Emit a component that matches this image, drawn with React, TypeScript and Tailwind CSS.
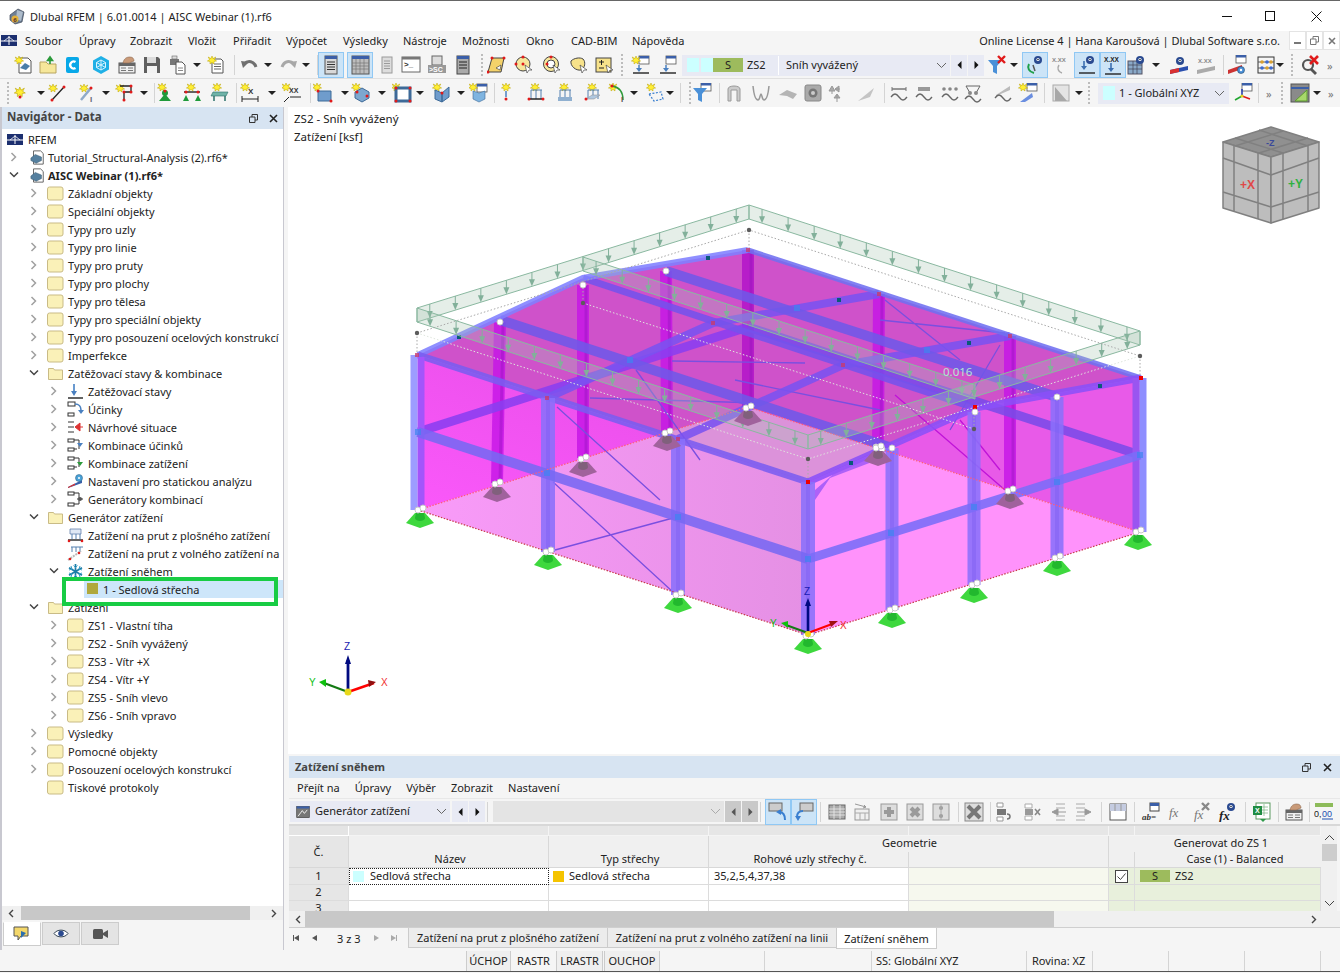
import React, { ReactNode } from "react";

const Sx = ({ x, y, s = 1 }: { x: number; y: number; s?: number }) => (
  <path transform={`translate(${x} ${y}) scale(${s})`} d="M4 0l1 2.6L7.8 1 6.4 3.6 8.6 5l-2.6.4L6 8 4 6.4 2 8l0-2.6L-.6 5l2.2-1.4L.2 1 3 2.6z" fill="#ffee33" stroke="#b9a100" strokeWidth=".5" />
);
const Rd = ({ x, y }: { x: number; y: number }) => <circle cx={x} cy={y} r="1.5" fill="#e01a1a" />;
const Win = ({ x = 9, y = 1 }: { x?: number; y?: number }) => (
  <g><rect x={x} y={y} width="10" height="8" fill="#fff" stroke="#555" strokeWidth=".8" /><rect x={x} y={y} width="10" height="2.5" fill="#3b5fa8" /></g>
);
const Arr = () => <path d="M14 10l-1 5-4-2z" fill="#fff" stroke="#333" strokeWidth=".6" />;
const Txt = ({ x, y, t, c = "#333", s = 6, w = 700 }: { x: number; y: number; t: string; c?: string; s?: number; w?: number }) => (
  <text x={x} y={y} fontSize={s} fontWeight={w} fill={c} fontFamily="Liberation Sans, sans-serif">{t}</text>
);
const Base = ({ y = 17, c = "#222" }: { y?: number; c?: string }) => <path d={`M2 ${y}h16`} stroke={c} strokeWidth="1.4" />;
const DownA = ({ x = 8, y = 7, c = "#4a80c0" }: { x?: number; y?: number; c?: string }) => (
  <g><path d={`M${x} ${y}v6`} stroke={c} strokeWidth="1.6" /><path d={`M${x - 3} ${y + 5}h6l-3 4z`} fill={c} /></g>
);
const EyeI = ({ x = 12, y = 5 }: { x?: number; y?: number }) => (
  <g><circle cx={x} cy={y} r="4" fill="#2a4a90" /><circle cx={x} cy={y - .5} r="1.6" fill="#fff" /><circle cx={x} cy={y - .5} r=".8" fill="#123" /></g>
);
const Wave = ({ y = 14 }: { y?: number }) => <path d={`M2 ${y}c3-4 5-4 8 0s5 4 8 0`} fill="none" stroke="#666" strokeWidth="1.3" />;
const G = "#9a9a9a";

const ICONS: Record<string, ReactNode> = {
  new: <g><path d="M5 3h9l3 3v12H5z" fill="#fff" stroke="#555" /><path d="M6 13l5-5 5 3-4 4z" fill="#4a7ea8" /><Sx x={1} y={1} /></g>,
  open: <g><path d="M2 7h6l2 2h8v9H2z" fill="#f6e79a" stroke="#b8a560" /><path d="M12 9V3M9.5 5.5L12 2l2.5 3.500z" stroke="#2b9a3a" fill="#2b9a3a" strokeWidth="1.600" /></g>,
  dlubal: <g><rect x="3" y="2" width="13" height="16" rx="2" fill="#08a8e8" /><path d="M12.500 7a3.500 3.500 0 1 0 0 6" fill="none" stroke="#fff" strokeWidth="2.400" /></g>,
  web: <g><path d="M10 1l8 4.500v9L10 19l-8-4.500v-9z" fill="#1fb0e6" /><path d="M10 5l4.500 2.500v5L10 15l-4.500-2.500v-5zM10 5v10M5.500 7.500l9 5M14.500 7.500l-9 5" fill="none" stroke="#d9f4ff" strokeWidth="1" /></g>,
  report: <g><rect x="2" y="8" width="16" height="10" fill="#efefef" stroke="#555" /><path d="M2 8h16v3H2z" fill="#666" /><path d="M6 8c1-5 4-6 7-6 3 0 4 2 4 4l-5 2z" fill="#c99a78" stroke="#8d6a50" strokeWidth=".6" /><path d="M4 13h5M4 15.500h5M11 13h5M11 15.500h5" stroke="#777" /></g>,
  save: <g><path d="M2 2h14l2 2v14H2z" fill="#5f5f5f" /><rect x="5" y="2" width="9" height="6" fill="#dcdcdc" /><rect x="5" y="11" width="10" height="7" fill="#f2f2f2" /></g>,
  print: <g><rect x="2" y="4" width="9" height="6" fill="#777" /><rect x="4" y="1" width="5" height="3" fill="#ddd" stroke="#666" strokeWidth=".6" /><path d="M8 7h6l3 3v9H8z" fill="#fff" stroke="#555" /><path d="M10 13h5M10 15.500h5" stroke="#888" /></g>,
  note: <g><path d="M6 4h9l2 2v12H6z" fill="#fff" stroke="#555" /><path d="M8 9h7M8 11.500h7M8 14h7" stroke="#666" /><Sx x={2} y={1} /></g>,
  undo: <g><path d="M4 9c4-4 10-3 12 3" fill="none" stroke="#707070" strokeWidth="3" /><path d="M1 6l8 1-6 6z" fill="#707070" /></g>,
  redo: <g><path d="M16 9c-4-4-10-3-12 3" fill="none" stroke="#a8a8a8" strokeWidth="3" /><path d="M19 6l-8 1 6 6z" fill="#a8a8a8" /></g>,
  panel: <g><rect x="4" y="1" width="12" height="18" fill="#d8d8d8" stroke="#555" /><rect x="4" y="1" width="12" height="3" fill="#3b5fa8" /><path d="M6 7h8M6 9.500h8M6 12h8M6 14.500h8" stroke="#333" /></g>,
  table: <g><rect x="2" y="1" width="17" height="18" fill="#bdbdbd" stroke="#555" /><rect x="2" y="1" width="17" height="3" fill="#3b5fa8" /><path d="M2 8h17M2 11h17M2 14h17M6 4v15M10 4v15M14 4v15" stroke="#777" strokeWidth=".7" /></g>,
  gdoc: <g><rect x="5" y="2" width="10" height="16" fill="#ddd" stroke={G} /><path d="M7 6h6M7 8.500h6M7 11h6M7 13.500h6" stroke={G} /></g>,
  cons: <g><rect x="1" y="2" width="18" height="15" fill="#fff" stroke="#666" /><rect x="1" y="2" width="18" height="2.500" fill="#777" /><Txt x={3} y={12} t=">_" s={8} /></g>,
  sc: <g><rect x="5" y="1" width="10" height="9" fill="#ddd" stroke="#666" /><rect x="1" y="10" width="18" height="8" fill="#999" /><Txt x={2} y={17} t=">SC" s={7} c="#fff" /></g>,
  list: <g><rect x="4" y="1" width="12" height="18" fill="#aaa" stroke="#444" /><rect x="4" y="1" width="12" height="3" fill="#3b5fa8" /><path d="M6 7h8M6 10h8M6 13h8" stroke="#222" /></g>,
  s1: <g><path d="M5 3h12l-3 14H1z" fill="#f4d26a" stroke="#444" /><Rd x={5} y={3} /><Rd x={17} y={3} /><Rd x={1} y={17} /><Arr /></g>,
  s2: <g><circle cx="9" cy="9" r="7" fill="#f7e79b" stroke="#444" /><Rd x={9} y={2} /><Rd x={2} y={9} /><Rd x={9} y={9} /><path d="M11 10l2 8 2-3 3 0z" fill="#fff" stroke="#333" strokeWidth=".6" /></g>,
  s3: <g><circle cx="9" cy="9" r="7.500" fill="#f7e79b" stroke="#444" /><circle cx="9" cy="9" r="4" fill="#fff" stroke="#444" /><Rd x={9} y={2} /><Rd x={5} y={9} /><path d="M11 10l2 8 2-3 3 0z" fill="#fff" stroke="#333" strokeWidth=".6" /></g>,
  s4: <g><path d="M3 6c3-3 9-4 12-2 3 3 2 9-2 11-5 1-11-4-10-9z" fill="#f7e28a" stroke="#444" /><path d="M12 10l2 8 2-3 3 0z" fill="#fff" stroke="#333" strokeWidth=".6" /></g>,
  s5: <g><rect x="2" y="3" width="15" height="14" fill="#f7e28a" stroke="#444" /><path d="M5 7h5M7.500 5v5M5 13h5" stroke="#222" /><path d="M12 10l2 8 2-3 3 0z" fill="#fff" stroke="#333" strokeWidth=".6" /></g>,
  w1: <g><Win x={8} y={1} /><Sx x={1} y={1} /><path d="M8 10v5" stroke="#4a80c0" strokeWidth="1.500" /><path d="M5 13h6l-3 4z" fill="#4a80c0" /><Base y={18} /></g>,
  w2: <g><Win x={8} y={1} /><path d="M8 10v5" stroke="#4a80c0" strokeWidth="1.500" /><path d="M5 13h6l-3 4z" fill="#4a80c0" /><Base y={18} /></g>,
  star: <g><Sx x={5} y={4} s={1.200} /><Rd x={10} y={14} /></g>,
  line: <g><Sx x={1} y={1} /><path d="M4 17L16 4" stroke="#222" strokeWidth="1.300" /><Rd x={4} y={17} /><Rd x={16} y={4} /></g>,
  lineI: <g><Sx x={2} y={1} /><path d="M3 17L13 5" stroke="#8fa9c8" strokeWidth="2.500" /><Rd x={13} y={5} /><Txt x={12} y={19} t="I" s={8} c="#667" /></g>,
  poly: <g><Sx x={1} y={1} /><path d="M5 3h11v6H9v8" fill="none" stroke="#222" strokeWidth="1.300" /><Rd x={16} y={3} /><Rd x={16} y={9} /><Rd x={9} y={9} /><Rd x={9} y={17} /></g>,
  pawn: <g><Sx x={3} y={0} /><circle cx="10" cy="10" r="3" fill="#1f9a3a" /><path d="M4 18l5-6h2l5 6z" fill="#1f9a3a" /><Rd x={10} y={8} /></g>,
  pawn2: <g><Sx x={5} y={0} /><path d="M2 9h16" stroke="#222" strokeWidth="1.400" /><Rd x={4} y={9} /><Rd x={16} y={9} /><path d="M1 18l3-6 3 6zM13 18l3-6 3 6z" fill="#1f9a3a" /></g>,
  slab: <g><Sx x={3} y={0} /><path d="M3 9h15l-2 4H1z" fill="#6fb3a8" stroke="#2b7068" strokeWidth=".6" /><path d="M4 13v5M15 13v5" stroke="#2b7068" strokeWidth="1.500" /></g>,
  dimx: <g><Sx x={1} y={0} /><Txt x={8} y={11} t="X" s={8} /><path d="M2 16h16M2 13v6M18 13v6" stroke="#222" /></g>,
  dimxx: <g><Sx x={0} y={0} /><Txt x={7} y={10} t="XX" s={7} /><path d="M8 14h11M7 14l-5 5" stroke="#222" /></g>,
  surf: <g><Sx x={0} y={0} /><path d="M5 8h13v10H5z" fill="#6f9ccc" stroke="#3d6a98" /><Rd x={5} y={8} /><Rd x={18} y={18} /></g>,
  solid: <g><Sx x={1} y={0} /><path d="M4 9l7-4 7 4v6l-7 4-7-4z" fill="#7da7cf" stroke="#3d6a98" /><Rd x={6} y={9} /><Rd x={16} y={13} /></g>,
  frame: <g><Sx x={0} y={0} /><rect x="4" y="5" width="14" height="13" fill="#fff" stroke="#3d6a98" strokeWidth="3" /><Rd x={4} y={5} /><Rd x={18} y={5} /><Rd x={4} y={18} /><Rd x={18} y={18} /></g>,
  book: <g><Sx x={1} y={0} /><path d="M3 7l7 3v9l-7-3zM10 10l7-6v10l-7 5z" fill="#6f9ccc" stroke="#3d6a98" /><Rd x={10} y={10} /></g>,
  box3: <g><Win x={8} y={1} /><Sx x={0} y={0} /><path d="M4 8l6 2 6-2v8l-6 3-6-3z" fill="#7fb4e0" stroke="#3d6a98" strokeWidth=".6" /></g>,
  pin: <g><Sx x={5} y={0} /><path d="M9 8v6" stroke="#4a80c0" strokeWidth="1.500" /><Rd x={9} y={16} /></g>,
  bars: <g><Sx x={5} y={0} /><path d="M5 7h11M5 7v9M10 7v9M15 7v9" stroke="#5580b0" /><path d="M3 16h14" stroke="#222" strokeWidth="1.500" /><Rd x={3} y={16} /><Rd x={17} y={16} /></g>,
  bars2: <g><Sx x={5} y={0} /><path d="M5 7h11M5 7v9M10 7v9M15 7v9" stroke="#5580b0" /><rect x="3" y="14" width="14" height="4" fill="#90b0d0" /></g>,
  bars3: <g><Sx x={5} y={0} /><path d="M5 7h11M5 7v9M10 7v9M15 7v9" stroke="#5580b0" /><path d="M3 16l6-4h8l-6 4z" fill="#b0c8e0" stroke="#888" strokeWidth=".5" /><Rd x={3} y={16} /></g>,
  curveI: <g><Sx x={1} y={0} /><path d="M4 3c7 1 11 6 11 14" fill="none" stroke="#2f9a3a" strokeWidth="1.500" /><Txt x={13} y={19} t="I" s={8} c="#555" /><Rd x={4} y={3} /></g>,
  dash: <g><Sx x={2} y={0} /><path d="M4 11l12-2 2 7-9 2z" fill="none" stroke="#3a7fd0" strokeDasharray="2 1.500" strokeWidth="1.200" /></g>,
  filt: <g><Win x={9} y={0} /><path d="M1 5h14l-5 6v8l-4-2v-6z" fill="#4a90d8" /></g>,
  filtx: <g><path d="M1 5h14l-5 6v8l-4-2v-6z" fill="#4a90d8" /><path d="M11 1l7 7M18 1l-7 7" stroke="#e01a1a" strokeWidth="2.400" /></g>,
  arch: <path d="M4 18V6c0-4 12-4 12 0v12h-3V7H7v11z" fill="#ccc" stroke={G} />,
  vee: <path d="M2 3c1 10 3 14 5 14s2-6 3-6 1 6 3 6 4-4 5-14" fill="none" stroke={G} strokeWidth="1.500" />,
  wing: <path d="M1 12l8-5 10 4-4 5-6-3z" fill="#b5b5b5" />,
  cubeg: <g><rect x="2" y="2" width="16" height="16" rx="2" fill="#aaa" stroke="#888" /><circle cx="10" cy="10" r="4.500" fill="#777" /><circle cx="10" cy="10" r="2" fill="#ccc" /></g>,
  arrg: <path d="M5 3l3 5H2zM5 8v3M13 6H8m4-3v6l-4-3zM10 19v-7m-3 3l3-4 3 4z" fill="#aaa" stroke="#999" />,
  blade: <path d="M2 18L18 5l-4 9z" fill="#c4c4c4" />,
  l1: <g><path d="M3 6h14" stroke="#777" strokeWidth="1.500" /><path d="M3 4v4M17 4v4" stroke="#777" /><Wave /></g>,
  l2: <g><path d="M4 6h12" stroke="#999" strokeWidth="4" /><Wave /></g>,
  l3: <g><circle cx="4" cy="6" r="1.800" fill="#888" /><circle cx="10" cy="6" r="1.800" fill="#888" /><circle cx="16" cy="6" r="1.800" fill="#888" /><Wave /></g>,
  l4: <g><path d="M3 3h14M3 3l4 7M17 3l-4 7" stroke="#666" /><circle cx="7" cy="10" r="2" fill="#888" /><circle cx="13" cy="10" r="2" fill="#888" /><Wave y={16} /></g>,
  l5: <g><path d="M3 12L17 3v4L3 13z" fill="#bbb" /><Wave y={15} /></g>,
  l6: <g><Win x={9} y={0} /><Sx x={1} y={0} /><path d="M2 19l12-9 1 4-8 5z" fill="#6a8ee0" /></g>,
  tri: <g><rect x="2" y="2" width="16" height="16" fill="#e4e4e4" stroke="#aaa" /><path d="M4 4l12 14H4z" fill="#a8a8a8" /></g>,
  xyz: <g><Win x={9} y={0} /><path d="M9 13V6" stroke="#2a3fae" strokeWidth="1.600" /><path d="M9 13l8 3" stroke="#e01a1a" strokeWidth="1.600" /><path d="M9 13l-7 4" stroke="#1fa52f" strokeWidth="1.600" /><circle cx="9" cy="13" r="1.500" fill="#e5d21a" /></g>,
  gtab: <g><rect x="1" y="1" width="18" height="18" fill="#8a8a8a" stroke="#555" /><path d="M1 5h18" stroke="#3b5fa8" strokeWidth="2" /><path d="M5 18L17 7v11z" fill="#a7d86a" stroke="#5d9a30" /></g>,
  eyearc: <g><EyeI x={13} y={5} /><path d="M4 9c-2 4 0 8 5 9" fill="none" stroke="#1fa04a" strokeWidth="2" /><path d="M8 10l2 6" stroke="#555" strokeWidth="1.500" /></g>,
  xxxarc: <g><Txt x={1} y={7} t="X.XX" s={6} c="#888" /><path d="M8 10c-2 3-1 7 3 8" fill="none" stroke="#aaa" strokeWidth="1.500" /></g>,
  eyeload: <g><EyeI x={13} y={5} /><DownA x={7} y={6} c="#3c6fb0" /><Base y={18} /></g>,
  xxxload: <g><Txt x={1} y={7} t="X.XX" s={6.500} c="#222" /><DownA x={8} y={8} c="#3c6fb0" /><Base y={19} /></g>,
  grideye: <g><rect x="1" y="6" width="14" height="13" fill="#8aa9c8" stroke="#556" /><path d="M1 10h14M1 14h14M6 6v13M10 6v13" stroke="#445" strokeWidth=".7" /><EyeI x={13} y={5} /></g>,
  eyebeam: <g><EyeI x={11} y={6} /><path d="M1 15l18-4v4L1 19z" fill="#2a4fae" /><path d="M1 15l9-2v4l-9 2z" fill="#d93030" /></g>,
  xxxbeam: <g><Txt x={2} y={8} t="X.XX" s={6} c="#888" /><path d="M1 15l18-4v4L1 19z" fill="#aaa" /></g>,
  wingear: <g><Win x={9} y={0} /><path d="M1 15l14-5v4L1 19z" fill="#c33" /><circle cx="14" cy="15" r="3.500" fill="#4a90d8" stroke="#246" strokeWidth=".6" /><circle cx="14" cy="15" r="1.200" fill="#fff" /></g>,
  abacus: <g><rect x="2" y="2" width="16" height="16" fill="none" stroke="#333" /><path d="M2 7h16M2 13h16" stroke="#555" /><circle cx="6" cy="7" r="1.800" fill="#d9a030" /><circle cx="11" cy="7" r="1.800" fill="#3d6ad0" /><circle cx="15" cy="7" r="1.800" fill="#d9a030" /><circle cx="6" cy="13" r="1.800" fill="#3d6ad0" /><circle cx="11" cy="13" r="1.800" fill="#d9a030" /><circle cx="15" cy="13" r="1.800" fill="#3d6ad0" /></g>,
  searchx: <g><circle cx="8" cy="10" r="5" fill="none" stroke="#555" strokeWidth="2.200" /><path d="M11 14l5 5" stroke="#555" strokeWidth="2.800" /><path d="M10 1l8 8M18 1l-8 8" stroke="#e01a1a" strokeWidth="2.600" /></g>,
  tgen: <g><rect x="1" y="2" width="18" height="16" fill="#777" stroke="#444" /><rect x="1" y="2" width="18" height="3" fill="#3b5fa8" /><path d="M3 16l6-8 3 4 4-5" stroke="#fff" strokeWidth="1.200" fill="none" /></g>,
  winback: <g><rect x="1" y="1" width="13" height="8" fill="#ccc" stroke="#666" /><path d="M17 18c0-5-2-8-6-8" fill="none" stroke="#3a7fd0" strokeWidth="2" /><path d="M8 10l5-3v6z" fill="#3a7fd0" /></g>,
  winfwd: <g><rect x="6" y="1" width="13" height="8" fill="#ccc" stroke="#666" /><path d="M3 15c0-4 2-6 6-6" fill="none" stroke="#3a7fd0" strokeWidth="2" /><path d="M1 14l3 5 3-5z" fill="#3a7fd0" /></g>,
  tgrid: <g><rect x="2" y="3" width="16" height="14" fill="#aaa" stroke="#666" /><path d="M2 7h16M2 10h16M2 13h16M7 3v14M13 3v14" stroke="#eee" strokeWidth=".8" /></g>,
  tins: <g><rect x="3" y="7" width="14" height="11" fill="#f0f0f0" stroke="#999" /><path d="M3 11h14M8 11v7M13 11v7" stroke="#aaa" /><path d="M3 2l11 3m0 0l-2-2m2 2l-3 1" stroke="#999" fill="none" /></g>,
  tplus: <g><rect x="2" y="2" width="16" height="16" fill="#ddd" stroke="#999" /><path d="M10 5v10M5 10h10" stroke="#9a9a9a" strokeWidth="4" /></g>,
  tx: <g><rect x="2" y="2" width="16" height="16" fill="#ddd" stroke="#999" /><path d="M6 6l8 8M14 6l-8 8" stroke="#9a9a9a" strokeWidth="4" /></g>,
  tdots: <g><rect x="2" y="2" width="16" height="16" fill="#ddd" stroke="#999" /><circle cx="10" cy="6" r="2" fill="#999" /><circle cx="10" cy="14" r="2" fill="#999" /><path d="M10 2v16" stroke="#aaa" /></g>,
  bigx: <g><rect x="1" y="1" width="18" height="18" fill="#ddd" stroke="#888" /><path d="M4 4l12 12M16 4L4 16" stroke="#777" strokeWidth="4" /></g>,
  b1: <g><path d="M2 1h6v4H2z" fill="#fff" stroke="#999" /><rect x="2" y="7" width="9" height="6" fill="#777" /><path d="M2 15h6v4H2z" fill="#fff" stroke="#999" /><path d="M12 12c4 0 4 5 0 5" fill="none" stroke="#777" strokeWidth="1.500" /></g>,
  b2: <g><path d="M3 2h7v4H3zM3 14h7v4H3z" fill="#fff" stroke="#aaa" /><rect x="3" y="7" width="8" height="6" fill="#999" /><path d="M13 7l5 6M18 7l-5 6" stroke="#888" strokeWidth="1.600" /></g>,
  b3: <g><path d="M8 2h9M8 6h9M8 14h9M8 18h9" stroke="#aaa" /><path d="M18 10H7m3-3l-6 3 6 3z" fill="#999" stroke="#999" /></g>,
  b4: <g><path d="M2 2h9M2 6h9M2 14h9M2 18h9" stroke="#aaa" /><path d="M3 10h11m-3-3l6 3-6 3z" fill="#999" stroke="#999" /></g>,
  hdr: <g><rect x="2" y="2" width="16" height="16" fill="#fff" stroke="#555" /><rect x="2" y="2" width="16" height="7" fill="#c4cbe0" /><path d="M7 2v7M13 2v7" stroke="#999" /></g>,
  abeq: <g><rect x="9" y="1" width="9" height="8" fill="#fff" stroke="#444" /><rect x="9" y="1" width="9" height="3" fill="#3b5fa8" /><text x="1" y="18" fontSize="9" fontWeight="700" fontStyle="italic" fontFamily="Liberation Serif, serif" fill="#333">ab=</text></g>,
  fx: <text x="2" y="15" fontSize="13" fontStyle="italic" fontFamily="Liberation Serif, serif" fill="#777">fx</text>,
  fxx: <g><text x="2" y="17" fontSize="13" fontStyle="italic" fontFamily="Liberation Serif, serif" fill="#777">fx</text><path d="M10 1l7 7M17 1l-7 7" stroke="#888" strokeWidth="2.400" /></g>,
  fxe: <g><text x="1" y="18" fontSize="13" fontWeight="700" fontStyle="italic" fontFamily="Liberation Serif, serif" fill="#222">fx</text><EyeI x={13} y={5} /></g>,
  excel: <g><rect x="4" y="1" width="14" height="16" fill="#fff" stroke="#5a9a60" /><path d="M9 5h7M9 8h7M9 11h7M12 2v12" stroke="#7ab07e" strokeWidth=".7" /><rect x="1" y="4" width="9" height="9" fill="#1e8c42" /><Txt x={3} y={11} t="X" s={7} c="#fff" /><path d="M8 17h6l-3 3z" fill="#2f9a4a" /></g>,
  zero: <g><rect x="1" y="1" width="18" height="4" fill="#8dbb5a" /><Txt x={0} y={15} t="0," s={9} w={400} c="#222" /><Txt x={8} y={15} t="00" s={9} w={400} c="#1f4fb0" /><path d="M8 17h11" stroke="#1f4fb0" /></g>,
};

const Ico = ({ k, s = 20 }: { k: string; s?: number }) => (
  <svg viewBox="0 0 20 20" width={s} height={s} className="shrink-0">{ICONS[k]}</svg>
);
const Drop = () => <div className="h-0 w-0 border-x-[4px] border-t-[4px] border-x-transparent border-t-[#222]" />;

type It = [number, ReactNode];
const i = (cx: number, k: string): It => {
  if (k === "drop") return [cx - 4, <Drop />];
  if (k === "sep") return [cx, <div className="h-[20px] w-px bg-[#d4d4d4]" />];
  if (k === "grip") return [cx - 1, <div className="h-[22px] w-[2px] border-l-2 border-dotted border-[#bcbcbc]" />];
  if (k === "more") return [cx - 4, <span className="text-[11px] leading-none text-[#777]">»</span>];
  if (k[0] === "*") return [cx - 13, <div className="flex h-[26px] w-[26px] items-center justify-center border border-[#90c8f4] bg-[#cce4f7]"><Ico k={k.slice(1)} /></div>];
  return [cx - 10, <Ico k={k} />];
};
function Strip({ from = 0, items }: { from?: number; items: It[] }) {
  return (
    <div className="flex h-full items-center">
      <div className="shrink-0" style={{ width: items[0][0] - from }} />
      {items.map(([x, n], idx) => (
        <div key={idx} className="flex shrink-0 items-center" style={{ width: idx < items.length - 1 ? items[idx + 1][0] - x : undefined }}>{n}</div>
      ))}
    </div>
  );
}
const list = (a: [number, string][]) => a.map(([c, k]) => i(c, k));
const Chevs = ({ dim = false }: { dim?: boolean }) => (
  <div className="flex h-[21px] gap-px">
    {["M4 0L0 4l4 4z", "M0 0l4 4-4 4z"].map((d) => (
      <div key={d} className={`flex w-[16px] items-center justify-center ${dim ? "bg-[#c9c9c9]" : "bg-[#e8eaf4]"}`}>
        <svg width="5" height="8" viewBox="0 0 4 8"><path d={d} fill={dim ? "#555" : "#111"} /></svg>
      </div>
    ))}
  </div>
);
const VChev = ({ c = "#666" }: { c?: string }) => (
  <svg width="11" height="7" viewBox="0 0 11 7"><path d="M1 1l4.500 4.500L10 1" fill="none" stroke={c} /></svg>
);

const TB1 = [
  ...list([[24, "new"], [48, "open"], [73, "dlubal"], [101, "web"], [127, "report"], [152, "save"], [178, "print"], [197, "drop"], [216, "note"], [234, "sep"], [250, "undo"], [268, "drop"], [288, "redo"], [306, "drop"], [317, "sep"], [331, "*panel"], [360, "*table"], [387, "gdoc"], [411, "cons"], [437, "sc"], [463, "list"], [482, "grip"], [497, "s1"], [524, "s2"], [552, "s3"], [578, "s4"], [604, "s5"], [622, "grip"], [641, "w1"], [668, "w2"]]),
  [682, (
    <div className="flex h-[21px] w-[268px] items-center bg-[#e8eaf4]">
      <div className="ml-[5px] h-[14px] w-[12px] bg-[#ccffff]" /><div className="ml-[2px] h-[14px] w-[12px] bg-[#ccffff]" />
      <div className="flex h-[14px] w-[30px] items-center justify-center bg-[#9dbb5d] pb-[1px] text-[#222]">S</div>
      <span className="ml-[4px] w-[31px] pb-[2px]">ZS2</span><div className="h-[19px] w-px bg-white" /><span className="ml-[7px] flex-1 pb-[2px]">Sníh vyvážený</span>
      <div className="mr-[3px]"><VChev /></div>
    </div>
  )] as It,
  [951, <Chevs />] as It,
  ...list([[997, "filtx"], [1014, "drop"], [1035, "*eyearc"], [1061, "xxxarc"], [1087, "*eyeload"], [1113, "*xxxload"], [1137, "grideye"], [1156, "drop"], [1179, "eyebeam"], [1206, "xxxbeam"], [1223, "sep"], [1237, "wingear"], [1266, "abacus"], [1280, "drop"], [1292, "grip"], [1310, "searchx"], [1331, "more"]]),
];
const TB2 = [
  ...list([[8, "grip"], [20, "star"], [41, "drop"], [58, "line"], [88, "lineI"], [106, "drop"], [125, "poly"], [144, "drop"], [154, "sep"], [165, "pawn"], [192, "pawn2"], [220, "slab"], [236, "sep"], [250, "dimx"], [272, "drop"], [292, "dimxx"], [310, "sep"], [323, "surf"], [345, "drop"], [361, "solid"], [382, "drop"], [402, "frame"], [420, "drop"], [442, "book"], [461, "drop"], [479, "box3"], [494, "sep"], [507, "pin"], [536, "bars"], [565, "bars2"], [593, "bars3"], [618, "curveI"], [634, "drop"], [655, "dash"], [670, "drop"], [680, "sep"], [690, "grip"], [702, "filt"], [719, "sep"], [734, "arch"], [761, "vee"], [788, "wing"], [813, "cubeg"], [837, "arrg"], [866, "blade"], [884, "sep"], [899, "l1"], [924, "l2"], [950, "l3"], [973, "l4"], [1003, "l5"], [1028, "l6"], [1044, "sep"], [1061, "tri"], [1079, "drop"], [1089, "grip"]]),
  [1098, (
    <div className="flex h-[21px] w-[131px] items-center bg-[#e8eaf4]">
      <div className="ml-[5px] h-[14px] w-[12px] bg-[#ccffff]" /><span className="ml-[4px] flex-1 whitespace-nowrap pb-[2px]">1 - Globální XYZ</span><div className="mr-[4px]"><VChev /></div>
    </div>
  )] as It,
  ...list([[1243, "xyz"], [1258, "sep"], [1270, "more"], [1282, "grip"], [1300, "gtab"], [1317, "drop"], [1332, "more"]]),
];
const TB3 = [
  [290, (
    <div className="flex h-[21px] w-[160px] items-center bg-[#e8eaf4]">
      <div className="ml-[6px]"><Ico k="tgen" s={14} /></div><span className="ml-[5px] flex-1 pb-[2px]">Generátor zatížení</span><div className="mr-[3px]"><VChev /></div>
    </div>
  )] as It,
  [452, <Chevs />] as It,
  ...list([[487, "sep"]]),
  [493, (<div className="flex h-[21px] w-[231px] items-center justify-end bg-[#e4e4e4] pr-[3px]"><VChev c="#aaa" /></div>)] as It,
  [725, <Chevs dim />] as It,
  ...list([[760, "sep"], [778, "*winback"], [804, "*winfwd"], [820, "sep"], [837, "tgrid"], [862, "tins"], [889, "tplus"], [915, "tx"], [941, "tdots"], [958, "sep"], [974, "bigx"], [990, "sep"], [1005, "b1"], [1032, "b2"], [1058, "b3"], [1084, "b4"], [1101, "sep"], [1118, "hdr"], [1134, "sep"], [1151, "abeq"], [1177, "fx"], [1202, "fxx"], [1228, "fxe"], [1245, "sep"], [1262, "excel"], [1278, "sep"], [1294, "report"], [1309, "sep"], [1324, "zero"]]),
];

const Folder = ({ open = false }: { open?: boolean }) => (
  <svg width="17" height="15" viewBox="0 0 17 15" className="shrink-0">
    {open ? <path d="M1.500 2.500h5l1 1.500h8v9.500h-14z" fill="#faf1b8" stroke="#c9bb86" /> : <rect x=".5" y="1" width="15.500" height="13" rx="2" fill="#faf1b8" stroke="#c9bb86" />}
  </svg>
);
const ModelDoc = () => (
  <svg width="15" height="17" viewBox="0 0 17 17" className="shrink-0">
    <path d="M4 1h8l3 3v12H4z" fill="#fff" stroke="#555" />
    <path d="M1 9l5-4 7 3v4l-6 3-6-3z" fill="#55809f" stroke="#2e4f66" strokeWidth=".5" />
  </svg>
);
const TIC: Record<string, ReactNode> = {
  zs: <g><path d="M7 1v9" stroke="#6a9ad0" strokeWidth="2" /><path d="M4 8h6l-3 5z" fill="#4a80c0" /><path d="M1 15h15" stroke="#222" strokeWidth="1.400" /></g>,
  uc: <g><rect x="1" y="1" width="7" height="4" fill="#fff" stroke="#333" /><path d="M8 3c4 0 6 3 6 6" fill="none" stroke="#4a80c0" strokeWidth="1.600" /><path d="M11 9h6l-3 4z" fill="#4a80c0" /><rect x="1" y="12" width="6" height="3" fill="#fff" stroke="#333" /></g>,
  ns: <g><path d="M1 3h6M1 8h6M1 13h6" stroke="#333" /><path d="M8 8l5-4v8zM12 8h4" fill="#d33" stroke="#d33" /></g>,
  ku: <g><rect x="1" y="2" width="6" height="3" fill="#fff" stroke="#333" /><rect x="1" y="11" width="6" height="3" fill="#fff" stroke="#333" /><path d="M7 3h5v9M7 12h3" fill="none" stroke="#333" /><path d="M10 6h6l-3 4z" fill="#4a80c0" /></g>,
  kz: <g><rect x="1" y="2" width="6" height="3" fill="#fff" stroke="#333" /><rect x="1" y="11" width="6" height="3" fill="#fff" stroke="#333" /><path d="M7 3h5v9M7 12h3" fill="none" stroke="#333" /><path d="M10 7h6l-3 4z" fill="#2b9a3a" /></g>,
  sa: <g><path d="M1 14L15 7v3L1 15z" fill="#3a5fa8" /><path d="M1 14l7-3.500V12l-7 3z" fill="#d33" /><circle cx="12" cy="5" r="3.500" fill="#4aa3d8" stroke="#26567a" strokeWidth=".5" /><circle cx="12" cy="5" r="1" fill="#fff" /></g>,
  gk: <g><rect x="1" y="1" width="6" height="3" fill="#fff" stroke="#333" /><rect x="1" y="12" width="6" height="3" fill="#fff" stroke="#333" /><path d="M7 2h5v5M7 13h5V9M10 8h6" fill="none" stroke="#333" /><circle cx="13" cy="8" r="2" fill="#555" /></g>,
  p1: <g><path d="M3 2h11v5H3z" fill="#dfe8f4" stroke="#5070a0" strokeWidth=".7" /><path d="M5 7v5M9 7v5M13 7v5" stroke="#5580b0" /><path d="M1 13h15" stroke="#222" strokeWidth="1.400" /><circle cx="2" cy="14" r="1.300" fill="#e01a1a" /><circle cx="15" cy="14" r="1.300" fill="#e01a1a" /></g>,
  p2: <g><path d="M4 2h12M5 2v5M9 2v5M13 2v5" stroke="#5580b0" /><path d="M1 15L14 6" stroke="#bbb" strokeWidth="2" strokeDasharray="2 1" /><circle cx="3" cy="14" r="1.300" fill="#e01a1a" /><circle cx="12" cy="8" r="1.300" fill="#e01a1a" /></g>,
};
const TI = ({ k }: { k: string }) => <svg width="17" height="16" viewBox="0 0 17 16" className="shrink-0">{TIC[k]}</svg>;
const Snow = () => (
  <svg width="17" height="17" viewBox="0 0 17 17" className="shrink-0">
    <path d="M8.500 1v15M2 4.700l13 7.600M15 4.700L2 12.300" stroke="#1d7ea8" strokeWidth="1.700" />
    <path d="M6.500 2.500l2 2 2-2M6.500 14.500l2-2 2 2M2 7l3-1-1-3M15 7l-3-1 1-3M2 10l3 1-1 3M15 10l-3 1 1 3" stroke="#3ba0c8" fill="none" />
  </svg>
);
const Sw = ({ c }: { c: string }) => <div className="h-[11px] w-[11px] shrink-0" style={{ background: c }} />;

type Row = { l: number; t: string; ic: ReactNode; ch?: "r" | "d"; b?: boolean; sel?: boolean };
const F = <Folder />;
const FO = <Folder open />;
const rows: Row[] = [
  { l: 0, t: "Tutorial_Structural-Analysis (2).rf6*", ic: <ModelDoc />, ch: "r" },
  { l: 0, t: "AISC Webinar (1).rf6*", ic: <ModelDoc />, ch: "d", b: true },
  ...["Základní objekty", "Speciální objekty", "Typy pro uzly", "Typy pro linie", "Typy pro pruty", "Typy pro plochy", "Typy pro tělesa", "Typy pro speciální objekty", "Typy pro posouzení ocelových konstrukcí", "Imperfekce"].map((t) => ({ l: 1, t, ic: F, ch: "r" as const })),
  { l: 1, t: "Zatěžovací stavy & kombinace", ic: FO, ch: "d" },
  { l: 2, t: "Zatěžovací stavy", ic: <TI k="zs" />, ch: "r" },
  { l: 2, t: "Účinky", ic: <TI k="uc" />, ch: "r" },
  { l: 2, t: "Návrhové situace", ic: <TI k="ns" />, ch: "r" },
  { l: 2, t: "Kombinace účinků", ic: <TI k="ku" />, ch: "r" },
  { l: 2, t: "Kombinace zatížení", ic: <TI k="kz" />, ch: "r" },
  { l: 2, t: "Nastavení pro statickou analýzu", ic: <TI k="sa" />, ch: "r" },
  { l: 2, t: "Generátory kombinací", ic: <TI k="gk" />, ch: "r" },
  { l: 1, t: "Generátor zatížení", ic: FO, ch: "d" },
  { l: 2, t: "Zatížení na prut z plošného zatížení", ic: <TI k="p1" /> },
  { l: 2, t: "Zatížení na prut z volného zatížení na", ic: <TI k="p2" /> },
  { l: 2, t: "Zatížení sněhem", ic: <Snow />, ch: "d" },
  { l: 3, t: "1 - Sedlová střecha", ic: <Sw c="#b0a83c" />, sel: true },
  { l: 1, t: "Zatížení", ic: FO, ch: "d" },
  ...["ZS1 - Vlastní tíha", "ZS2 - Sníh vyvážený", "ZS3 - Vítr +X", "ZS4 - Vítr +Y", "ZS5 - Sníh vlevo", "ZS6 - Sníh vpravo"].map((t) => ({ l: 2, t, ic: F, ch: "r" as const })),
  { l: 1, t: "Výsledky", ic: F, ch: "r" },
  { l: 1, t: "Pomocné objekty", ic: F, ch: "r" },
  { l: 1, t: "Posouzení ocelových konstrukcí", ic: F, ch: "r" },
  { l: 1, t: "Tiskové protokoly", ic: F },
];
const CHEV_W = ["w-[30px]", "w-[47px]", "w-[67px]", "w-[84px]"];
const TreeRow = ({ r }: { r: Row }) => {
  const chevPos = ["pl-[10px]", "pl-[30px]", "pl-[50px]", ""][r.l];
  return (
    <div className="relative flex h-[18px] items-center">
      <div className={`${CHEV_W[r.l]} shrink-0 ${chevPos}`}>
        {r.ch === "r" && <svg width="8" height="10" viewBox="0 0 8 10"><path d="M1.500 1l4 4-4 4" fill="none" stroke="#a0a0a0" strokeWidth="1.500" /></svg>}
        {r.ch === "d" && <svg width="10" height="8" viewBox="0 0 10 8" className="-ml-[1px]"><path d="M1 1.500l4 4 4-4" fill="none" stroke="#444" strokeWidth="1.500" /></svg>}
      </div>
      <div className={r.l === 3 ? "flex h-[18px] flex-1 items-center" : "flex items-center"}>
        {r.sel ? (
          <div className="flex h-[18px] flex-1 items-center bg-[#cde6fa]"><div className="ml-[3px] -mt-[2px]">{r.ic}</div><span className="ml-[5px] whitespace-nowrap">{r.t}</span></div>
        ) : (
          <>
            <div className={`flex shrink-0 items-center ${r.l === 0 ? "w-[18px]" : "w-[21px]"}`}>{r.ic}</div>
            <span className={`whitespace-nowrap ${r.b ? "font-bold" : ""}`}>{r.t}</span>
          </>
        )}
      </div>
    </div>
  );
};

const RFEMLogo = ({ w = 16 }: { w?: number }) => (
  <svg width={w} height="11" viewBox="0 0 16 11" className="shrink-0">
    <rect width="16" height="11" fill="#1c2f6f" /><path d="M0 6h16M8 1v9" stroke="#fff" /><path d="M3 6l5-4 5 4" fill="none" stroke="#fff" strokeWidth=".8" />
  </svg>
);

// --- model ---
const L = "418,510", F0 = "808,635", R0 = "1140,532", B0 = "748,407";
const L1 = "418,355", F1 = "808,482", R1 = "1141,378", B1 = "748,250", P1 = "583,278", P2 = "975,408";
const Bm = ({ p, c, w, o = .88 }: { p: string; c: string; w: number; o?: number }) => <polyline points={p} fill="none" stroke={c} strokeWidth={w} opacity={o} />;
const Node = ({ x, y }: { x: number; y: number }) => <circle cx={x} cy={y} r="3" fill="#fff" stroke="#c8c8c8" />;
const Support = ({ x, y, back = false }: { x: number; y: number; back?: boolean }) => (
  <g>
    <path d={`M${x - 14} ${y + 13}L${x - 5} ${y + 3}H${x + 5}L${x + 14} ${y + 13}L${x} ${y + 18}z`} fill={back ? "#a0629c" : "#3ed83e"} />
    <path d={`M${x - 4} ${y + 3}h8l1 5a5 3 0 0 1-10 0z`} fill={back ? "#80607c" : "#22b82e"} />
    <Node x={x - 2} y={y} /><Node x={x + 3} y={y - 2} />
  </g>
);
const band = (ax: number, ay: number, bx: number, by: number, h = 14) => `${ax},${ay} ${bx},${by} ${bx},${by + h} ${ax},${ay + h}`;
const Arrows = ({ ax, ay, bx, by, n }: { ax: number; ay: number; bx: number; by: number; n: number }) => (
  <g>
    {Array.from({ length: n }).map((_, k) => {
      const t = (k + .5) / n;
      const x = ax + (bx - ax) * t, y = ay + (by - ay) * t;
      return <g key={k}><path d={`M${x} ${y}v8`} stroke="#82b09a" /><path d={`M${x - 3} ${y + 7}h6l-3 7z`} fill="#82b09a" /></g>;
    })}
  </g>
);
const Bands = [
  [417, 308, 749, 205, 13], [749, 205, 1140, 331, 15], [583, 257, 975, 385, 15], [417, 308, 808, 435, 15], [808, 435, 1140, 331, 13],
];
const Model = () => (
  <svg viewBox="288 107 1052 647" className="absolute inset-0 h-full w-full">
    <defs>
      <linearGradient id="lf" x1="0" x2="1" y1="0" y2="0"><stop offset="0" stopColor="#f99bf9" /><stop offset="1" stopColor="#e590e4" /></linearGradient>
      <linearGradient id="lw" x1="0" x2="1" y1="1" y2="0"><stop offset="0" stopColor="#fa58fa" /><stop offset="1" stopColor="#e44ce4" /></linearGradient>
    </defs>
    <polygon points={`${L} ${F0} 808,426 ${B0}`} fill="url(#lf)" />
    <polygon points={`${L} ${B0} 808,426 ${F1} ${L1}`} fill="url(#lw)" />
    <polygon points={`${F0} ${R0} 808,426`} fill="#ff92fb" />
    <polygon points={`808,426 ${R0} ${R1} ${P2} ${F1}`} fill="#e85ae8" />
    <polygon points={`${L1} ${P1} ${B1} ${R1} ${P2} ${F1}`} fill="#cf52ca" />
    <polygon points="661,434 748,407 881,449 808,482" fill="#dc92da" />
    {/* back columns */}
    {[[500, 322, 497, 483], [583, 285, 583, 458], [666, 271, 667, 432], [748, 250, 748, 407], [879, 294, 878, 448], [1010, 336, 1010, 490]].map(([a, b, c, d], k) => (
      <g key={k}><Bm p={`${a},${b} ${c},${d}`} c={k === 3 ? "#b010c8" : "#c414e6"} w={12} o={.8} /><Bm p={`${a + 3},${b} ${c + 3},${d}`} c="#8a10b8" w={3} o={.35} /></g>
    ))}
    {/* bracing */}
    <g stroke="#7a4fe0" strokeWidth="1.300" fill="none">
      <path d="M553 482L673 592M555 550L673 518M557 407L660 500M636 370L700 460" />
      <path d="M590 398L760 403M672 361L805 363M735 380L880 410M885 300L960 360M880 320L1005 333M1000 345L950 430" />
      <path d="M895 395L1005 490M960 420L1000 470" stroke="#c014d8" />
    </g>
    {/* girts back */}
    <Bm p="418,432 748,327" c="#8a3df0" w={9} />
    <Bm p="748,327 1140,455" c="#7a4ae8" w={9} />
    {/* rafters */}
    <Bm p="547,398 713,323 879,294" c="#7a52f0" w={8} />
    <Bm p="678,439 843,365 1010,336" c="#7a52f0" w={8} />
    <Bm p={`500,320 892,448`} c="#6f58e8" w={10} />
    <Bm p={`666,271 1057,397`} c="#6f58e8" w={10} />
    <Bm p={`${P1} ${P2}`} c="#7452ec" w={7} />
    <Bm p={`${L1} ${P1} ${B1}`} c="#8080ff" w={6} />
    <Bm p={`${B1} ${R1}`} c="#7070f0" w={5} />
    <Bm p={`${L1} ${F1}`} c="#7a5cf0" w={7} />
    <Bm p={`${F1} ${P2} ${R1}`} c="#8a50f8" w={7} />
    <polygon points="815,490 838,470 880,452 872,462 830,478 815,500" fill="#9a55f8" opacity=".8" />
    {/* front columns */}
    {[[548, 398, 548, 552], [678, 439, 678, 595], [808, 482, 808, 635], [892, 448, 892, 610], [974, 412, 974, 585], [1057, 397, 1057, 558]].map(([a, b, c, d], k) => (
      <g key={k}><Bm p={`${a},${b} ${c},${d}`} c="#8a70fb" w={k < 3 ? 14 : 13} /><Bm p={`${a},${b} ${c},${d}`} c="#7a5cf0" w={4} o={.4} /></g>
    ))}
    <Bm p="414,355 414,510" c="#9d9dff" w={7} o={1} />
    <Bm p="421,357 421,510" c="#a355fb" w={7} o={1} />
    <Bm p="1136,378 1136,532" c="#9a55f0" w={7} o={1} />
    <Bm p="1143,378 1143,532" c="#8e8eff" w={7} o={1} />
    <Bm p="418,432 808,559" c="#7868f2" w={10} />
    <Bm p="808,559 1140,455" c="#7a6cf8" w={9} />
    {/* floor dotted */}
    <g fill="none" strokeDasharray="1.500 1.500" strokeWidth="1.200">
      <polyline points={`${L} ${F0} ${R0}`} stroke="#c83c4c" />
      <polyline points={`${L} ${B0} ${R0}`} stroke="#ff5a7a" />
    </g>
    {/* beam joints */}
    {[[418, 432], [547, 473], [678, 517], [808, 559], [891, 533], [974, 507], [1057, 482], [1140, 455], [630, 360], [797, 308], [927, 350]].map(([x, y], k) => (
      <rect key={k} x={x - 3} y={y - 3} width="6" height="6" fill="#3f84f0" opacity=".7" />
    ))}
    {/* teal markers */}
    {[[459, 337], [708, 258], [839, 300], [969, 343], [1100, 386], [851, 463]].map(([x, y], k) => <rect key={k} x={x - 2} y={y - 2} width="4" height="4" fill="#0a5a78" />)}
    {/* load */}
    {Bands.map(([a, b, c, d, n], k) => (
      <g key={k}>
        <polygon points={band(a, b, c, d)} fill="#a9c6b4" opacity=".3" stroke="none" />
        <polygon points={band(a, b, c, d)} fill="none" stroke="#8ab8a0" />
        <Arrows ax={a} ay={b} bx={c} by={d} n={n} />
      </g>
    ))}
    <text x="943" y="376" fontSize="11.500" fill="#b2e6d2" fontFamily="Noto Sans, sans-serif">0.016</text>
    {/* dotted load refs */}
    <g fill="none" stroke="#a8a8a8" strokeDasharray="1.500 2" strokeWidth="1">
      <polyline points="417,333 749,230 1140,356" />
      <path d="M417,333V355M749,230V250M1140,356V378M808,459V482M974,429V408M583,303V278" />
    </g>
    <g fill="none" stroke="#dfe6de" strokeDasharray="1.500 2" strokeWidth="1">
      <polyline points="417,333 808,459 1140,356" />
      <polyline points="583,303 974,429" />
    </g>
    {[[417, 333], [749, 230], [583, 303], [1140, 356], [808, 459], [974, 429]].map(([x, y], k) => <circle key={k} cx={x} cy={y} r="2.200" fill="#5c5c5c" />)}
    {[[417, 355], [547, 398], [678, 439], [713, 323], [843, 365], [879, 294], [1010, 336], [748, 250]].map(([x, y], k) => <rect key={k} x={x - 2} y={y - 2} width="4" height="4" fill="#c83a70" opacity=".8" />)}
    {[[1141, 378], [808, 482], [975, 407]].map(([x, y], k) => <rect key={k} x={x - 2} y={y - 2} width="4" height="4" fill="#f00000" />)}
    {[[500, 322], [583, 285], [666, 271], [892, 448], [975, 412], [1057, 397]].map(([x, y], k) => <Node key={k} x={x} y={y} />)}
    <Node x={876} y={447} /><Node x={882} y={449} />
    {/* supports */}
    {[[497, 484], [583, 459], [667, 433], [748, 408], [878, 448], [1010, 491]].map(([x, y], k) => <Support key={k} x={x} y={y} back />)}
    {[[420, 510], [548, 552], [678, 595], [892, 610], [974, 585], [1057, 558], [1138, 532], [808, 636]].map(([x, y], k) => <Support key={k} x={x} y={y} />)}
    {/* local axes */}
    <g fontFamily="Liberation Sans, sans-serif" fontSize="10">
      <path d="M808 633V602" stroke="#000a80" strokeWidth="2.500" /><path d="M805 606l3-8 3 8z" fill="#000a80" />
      <path d="M808 633l24-9" stroke="#f00" strokeWidth="2" /><path d="M829 621l9 0-7 6z" fill="#a01010" />
      <path d="M808 633l-22-8" stroke="#137a13" strokeWidth="2" /><path d="M788 621l-7 2 7 5z" fill="#10c010" />
      <circle cx="808" cy="634" r="3" fill="#e8d81a" />
      <text x="804" y="595" fill="#1a1ab0">Z</text><text x="840" y="629" fill="#f03030">X</text><text x="770" y="627" fill="#10c010">Y</text>
    </g>
    {/* global axes */}
    <g fontFamily="Liberation Sans, sans-serif" fontSize="10">
      <path d="M348 692V660" stroke="#000a80" strokeWidth="2.800" /><path d="M345 664l3-9 3 9z" fill="#000a80" />
      <path d="M348 692l26-9" stroke="#f00" strokeWidth="2.400" /><path d="M368 680l8 2-7 5z" fill="#901010" />
      <path d="M348 692l-24-9" stroke="#137a13" strokeWidth="2.400" /><path d="M326 679l-7 3 7 5z" fill="#10c010" />
      <circle cx="348" cy="692" r="3.500" fill="#e8d81a" />
      <text x="344" y="650" fill="#1a1ab0">Z</text><text x="381" y="686" fill="#f03030">X</text><text x="309" y="686" fill="#10c010">Y</text>
    </g>
    {/* view cube */}
    <g stroke="#808080" strokeWidth="1.500" strokeLinejoin="round">
      <polygon points="1223,142 1271,127 1319,142 1271,157" fill="#909090" />
      <polygon points="1223,142 1271,157 1271,223 1223,208" fill="#bdbdbd" />
      <polygon points="1319,142 1271,157 1271,223 1319,208" fill="#bdbdbd" />
      <path d="M1234,145V212M1258,153V219M1283,153V219M1308,145V212M1223,158L1271,175L1319,158M1223,192L1271,207L1319,192M1235,138L1283,153M1259,130L1308,146M1259,153L1308,138M1235,146L1283,131" fill="none" />
    </g>
    <g fontFamily="Liberation Sans, sans-serif" fontWeight="700" fontSize="12">
      <text x="1240" y="189" fill="#e04848">+X</text><text x="1288" y="188" fill="#30b040">+Y</text><text x="1266" y="146" fill="#3a4a9a" fontSize="9">-Z</text>
    </g>
  </svg>
);

const Th = ({ c = "", children }: { c?: string; children?: ReactNode }) => <div className={`flex items-end justify-center border-[#d8d8d8] bg-[#f0f0f0] ${c}`}>{children}</div>;
const Td = ({ c = "", children }: { c?: string; children?: ReactNode }) => <div className={`flex items-center overflow-hidden border-b border-r border-[#dcdcdc] ${c}`}>{children}</div>;

const ScrollArrow = ({ d }: { d: string }) => <svg width="6" height="9" viewBox="0 0 6 9"><path d={d} fill="none" stroke="#444" strokeWidth="1.400" /></svg>;
const Tri = ({ d, c = "#555" }: { d: string; c?: string }) => <svg width="8" height="8" viewBox="0 0 8 8"><path d={d} fill={c} /></svg>;
function VChevUp() {
  return <svg width="11" height="7" viewBox="0 0 11 7"><path d="M1 6l4.500-4.500L10 6" fill="none" stroke="#444" /></svg>;
}

export default function App() {
  return (
    <div className="relative flex h-[973px] w-[1340px] flex-col overflow-hidden border-t border-[#666] bg-[#f5f5f5] font-['Noto_Sans',sans-serif] text-[11px] leading-none text-[#222]">
      {/* Title */}
      <div className="flex h-[30px] shrink-0 items-center bg-white">
        <svg width="18" height="18" viewBox="0 0 18 18" className="ml-[8px]">
          <path d="M2 8l8-6 6 3-2 10-7 2-5-4z" fill="#6d7f95" stroke="#3c4656" strokeWidth=".7" /><path d="M9 3l6 2-2 9-5-2z" fill="#aebccb" /><circle cx="7" cy="12" r="3.500" fill="#e3b13a" /><text x="5.300" y="14.500" fontSize="6" fontWeight="700" fill="#533">6</text>
        </svg>
        <span className="ml-[4px] text-[11px]">Dlubal RFEM | 6.01.0014 | AISC Webinar (1).rf6</span>
        <div className="ml-auto flex h-full items-center">
          <div className="flex w-[43px] justify-center"><div className="h-px w-[10px] bg-[#111]" /></div>
          <div className="flex w-[44px] justify-center"><div className="h-[10px] w-[10px] border border-[#111]" /></div>
          <div className="flex w-[48px] justify-center"><svg width="11" height="11" viewBox="0 0 11 11"><path d="M.5.500l10 10M10.500.500l-10 10" stroke="#111" /></svg></div>
        </div>
      </div>
      {/* Menu */}
      <div className="relative flex h-[21px] shrink-0 items-center pb-[2px]">
        <Strip items={[
          [1, <RFEMLogo />], [25, "Soubor"], [79, "Úpravy"], [130, "Zobrazit"], [188, "Vložit"], [233, "Přiřadit"], [286, "Výpočet"], [343, "Výsledky"], [403, "Nástroje"], [462, "Možnosti"], [526, "Okno"], [571, "CAD-BIM"], [632, "Nápověda"],
        ].map(([x, n]) => [x as number, n as ReactNode])} />
        <div className="ml-auto flex items-center">
          <span className="mr-[9px] whitespace-nowrap">Online License 4 | Hana Karoušová | Dlubal Software s.r.o.</span>
          {[<div className="mt-[5px] h-[2px] w-[7px] bg-[#777]" />, <svg width="9" height="9" viewBox="0 0 9 9"><path d="M.5 3h5.500v5.500H.5zM3 3V.5h5.500V6H6" fill="none" stroke="#777" /></svg>, <svg width="8" height="8" viewBox="0 0 8 8"><path d="M1 1l6 6M7 1L1 7" stroke="#777" strokeWidth="1.600" /></svg>].map((n, k) => (
            <div key={k} className="flex h-[19px] w-[17px] items-center justify-center border border-[#e4e4e4] bg-white">{n}</div>
          ))}
        </div>
      </div>
      {/* Toolbars */}
      <div className="h-[27px] shrink-0 border-b border-[#e0e0e0]"><Strip items={TB1} /></div>
      <div className="h-[28px] shrink-0"><Strip items={TB2} /></div>

      {/* Body */}
      <div className="flex h-[843px] shrink-0">
        {/* Navigator */}
        <div className="flex w-[284px] shrink-0 flex-col border-l-2 border-r border-[#c8c8d0] bg-white">
          <div className="flex h-[22px] shrink-0 items-center bg-[#d7e4f2] pl-[5px] pr-[5px]">
            <span className="pb-[2px] text-[11.500px] font-bold text-[#444]">Navigátor - Data</span>
            <svg width="9" height="9" viewBox="0 0 9 9" className="ml-auto"><path d="M.5 3h5.500v5.500H.5zM3 3V.5h5.500V6H6" fill="none" stroke="#333" /></svg>
            <svg width="9" height="9" viewBox="0 0 9 9" className="ml-[11px]"><path d="M1 1l7 7M8 1L1 8" stroke="#222" strokeWidth="1.600" /></svg>
          </div>
          <div className="relative flex-1 overflow-hidden pt-[1px]">
            <div className="flex h-[18px] items-center pl-[5px]"><RFEMLogo /><span className="ml-[5px]">RFEM</span></div>
            <div className="-ml-[2px]">
              {rows.map((r, k) => <TreeRow key={k} r={r} />)}
            </div>
            <div className="absolute left-[60px] top-[448px] h-[29px] w-[216px] border-[4.500px] border-[#18cc44]" />
          </div>
          <div className="flex h-[14px] shrink-0 items-center justify-between bg-[#f0f0f0] px-[6px]">
            <ScrollArrow d="M5 1L1.500 4.500 5 8" />
            <div className="absolute left-[21px] h-[14px] w-[229px] bg-[#c8c8c8]" />
            <ScrollArrow d="M1 1l3.500 3.500L1 8" />
          </div>
          <div className="flex h-[30px] shrink-0 items-start gap-px bg-[#f5f5f5] pl-[1px] pt-[2px]">
            <div className="flex h-[24px] w-[38px] items-center justify-center border border-[#ccc] border-t-white bg-white">
              <svg width="18" height="16" viewBox="0 0 18 16"><path d="M1 1h14v9H8l-3 4v-4H1z" fill="#f3d76a" stroke="#555" /><path d="M8 5l5 2-5 5z" fill="#2a6fb0" /></svg>
            </div>
            <div className="flex h-[23px] w-[38px] items-center justify-center border border-[#ccc] bg-[#e4e4e4]">
              <svg width="16" height="11" viewBox="0 0 16 11"><path d="M1 5.500C4 1 12 1 15 5.500 12 10 4 10 1 5.500z" fill="#fff" stroke="#345" /><circle cx="8" cy="5.500" r="2.800" fill="#2a4a90" /></svg>
            </div>
            <div className="flex h-[23px] w-[38px] items-center justify-center border border-[#ccc] bg-[#e4e4e4]">
              <svg width="15" height="10" viewBox="0 0 15 10"><rect width="10" height="10" rx="1.500" fill="#555" /><path d="M10 4l5-3v8l-5-3z" fill="#555" /></svg>
            </div>
          </div>
        </div>

        {/* Right column */}
        <div className="flex flex-1 flex-col pl-[4px]">
          <div className="relative h-[647px] shrink-0 bg-white">
            <Model />
            <div className="absolute left-[6px] top-[3px] text-[11.500px] leading-[18px]">
              <div>ZS2 - Sníh vyvážený</div>
              <div>Zatížení [ksf]</div>
            </div>
          </div>
          <div className="flex h-[196px] shrink-0 flex-col pl-[1px] pt-[2px]">
            <div className="flex h-[22px] shrink-0 items-center bg-[#d7e4f2] pl-[6px] pr-[8px]">
              <span className="pb-[2px] text-[11px] font-bold text-[#444]">Zatížení sněhem</span>
              <svg width="9" height="9" viewBox="0 0 9 9" className="ml-auto"><path d="M.5 3h5.500v5.500H.5zM3 3V.5h5.500V6H6" fill="none" stroke="#333" /></svg>
              <svg width="9" height="9" viewBox="0 0 9 9" className="ml-[12px]"><path d="M1 1l7 7M8 1L1 8" stroke="#222" strokeWidth="1.600" /></svg>
            </div>
            <div className="flex h-[20px] shrink-0 items-center gap-[15px] pb-[2px] pl-[8px]">
              <span>Přejít na</span><span>Úpravy</span><span>Výběr</span><span>Zobrazit</span><span>Nastavení</span>
            </div>
            <div className="h-[28px] shrink-0 border-b-2 border-[#d8d8d8] border-t border-t-[#e8e8e8]"><Strip from={289} items={TB3} /></div>
            {/* Table */}
            <div className="flex h-[85px] shrink-0 overflow-hidden">
              <div className="grid w-[1032px] shrink-0 grid-cols-[60px_200px_160px_200px_200px_26px_186px] grid-rows-[10px_16px_16px_17px_16px_16px]">
                <div className="col-span-1 border-b border-r border-white bg-[#e4e4e4]" />
                {[0, 1, 2, 3, 4, 5].map((k) => <div key={k} className="border-b border-r border-[#f4f4f4] bg-[#e6e6e6]" />)}
                <div className="row-span-2 flex items-center justify-center border-b border-r border-[#d8d8d8] bg-[#e6e6e6]">Č.</div>
                <Th c="border-r" />
                <Th c="border-r" />
                <div className="col-span-2 flex items-center justify-center border-r border-[#d8d8d8] bg-[#f0f0f0] pb-[3px] pl-[2px]">Geometrie</div>
                <div className="col-span-2 flex items-center justify-center bg-[#f0f0f0] pb-[3px] pl-[12px]">Generovat do ZS 1</div>
                <Th c="border-b border-r pb-[3px] pl-[3px]">Název</Th>
                <Th c="border-b border-r pb-[3px] pl-[3px]">Typ střechy</Th>
                <Th c="border-b border-r pb-[3px] pl-[3px]">Rohové uzly střechy č.</Th>
                <Th c="border-b border-r" />
                <Th c="border-b border-r" />
                <Th c="border-b pb-[3px] pl-[14px]">Case (1) - Balanced</Th>

                <Td c="justify-center bg-[#e6e6e6] pb-[2px]">1</Td>
                <div className="flex items-center border border-dotted border-[#222] bg-white"><div className="ml-[3px] h-[11px] w-[11px] bg-[#ccffff]" /><span className="ml-[6px] pb-[2px]">Sedlová střecha</span></div>
                <Td c="bg-white pl-[4px]"><Sw c="#f5c400" /><span className="ml-[5px] pb-[2px]">Sedlová střecha</span></Td>
                <Td c="bg-white pb-[2px] pl-[5px]">35,2,5,4,37,38</Td>
                <Td c="bg-[#f6f8ee]" />
                <Td c="justify-center bg-[#e8f0dc]">
                  <svg width="13" height="13" viewBox="0 0 13 13"><rect x=".5" y=".5" width="12" height="12" fill="#fff" stroke="#444" /><path d="M2.500 6.500l3 3 5-6" fill="none" stroke="#444" /></svg>
                </Td>
                <Td c="bg-[#e8f0dc] pl-[5px]"><div className="flex h-[12px] w-[30px] items-center justify-center bg-[#9dbb5d] pb-[1px]">S</div><span className="ml-[5px] pb-[2px]">ZS2</span></Td>

                <Td c="justify-center bg-[#e6e6e6] pb-[2px]">2</Td>
                <Td c="bg-white" /><Td c="bg-white" /><Td c="bg-white" /><Td c="bg-[#f6f8ee]" /><Td c="bg-[#e8f0dc]" /><Td c="bg-[#e8f0dc]" />
                <Td c="items-start justify-center bg-[#e6e6e6] pt-[1px]">3</Td>
                <Td c="bg-white" /><Td c="bg-white" /><Td c="bg-white" /><Td c="bg-[#f6f8ee]" /><Td c="bg-[#e8f0dc]" /><Td c="bg-[#e8f0dc]" />
              </div>
              <div className="flex w-[16px] shrink-0 flex-col items-center bg-[#f0f0f0] pt-[8px]">
                <VChevUp />
                <div className="mt-[3px] h-[17px] w-[15px] bg-[#cdcdcd]" />
                <div className="mt-auto mb-[4px]"><VChev c="#444" /></div>
              </div>
            </div>
            {/* h scroll */}
            <div className="relative flex h-[17px] shrink-0 items-center justify-between border-b border-[#cfcfcf] bg-[#f0f0f0] pl-[6px] pr-[23px]">
              <ScrollArrow d="M5 1L1.500 4.500 5 8" />
              <div className="absolute left-[16px] top-0 h-[16px] w-[749px] bg-[#c8c8c8]" />
              <ScrollArrow d="M1 1l3.500 3.500L1 8" />
            </div>
            {/* Tabs */}
            <div className="flex h-[21px] shrink-0 items-start">
              <div className="flex h-[20px] w-[119px] shrink-0 items-center">
                <div className="ml-[3px]"><Tri d="M1 1h1v6H1zM7 1v6L2 4z" /></div>
                <div className="ml-[11px]"><Tri d="M6 1v6L1 4z" /></div>
                <span className="ml-[18px] w-[34px]">3 z 3</span>
                <div className="ml-[1px]"><Tri d="M2 1v6l5-3z" c="#aaa" /></div>
                <div className="ml-[10px]"><Tri d="M7 1h-1v6h1zM1 1v6l5-3z" c="#aaa" /></div>
              </div>
              <div className="flex h-[20px] w-[199px] shrink-0 items-center justify-center border-b border-l border-[#ccc] bg-[#ececec]">Zatížení na prut z plošného zatížení</div>
              <div className="flex h-[20px] w-[229px] shrink-0 items-center justify-center border-b border-l border-[#ccc] bg-[#ececec] whitespace-nowrap">Zatížení na prut z volného zatížení na linii</div>
              <div className="flex h-[21px] w-[101px] shrink-0 items-center justify-center border-x border-b border-[#ccc] bg-white">Zatížení sněhem</div>
            </div>
          </div>
        </div>
      </div>
      {/* Status */}
      <div className="relative flex h-[22px] shrink-0 items-center border-b border-[#555]">
        <Strip items={[
          [466, <div className="flex h-[20px] w-[45px] items-center justify-center border-x border-[#ccc] bg-[#efefef]">ÚCHOP</div>],
          [511, <div className="flex w-[45px] justify-center">RASTR</div>],
          [556, <div className="flex h-[20px] w-[47px] items-center justify-center border-x border-[#ccc] bg-[#efefef]">LRASTR</div>],
          [604, <div className="flex h-[20px] w-[56px] items-center justify-center border-x border-[#ccc] bg-[#efefef]">OUCHOP</div>],
          [764, <div className="h-[20px] w-px bg-[#d4d4d4]" />],
          [871, <div className="flex h-[20px] items-center border-l border-[#d4d4d4] pl-[4px]">SS: Globální XYZ</div>],
          [1026, <div className="flex h-[20px] items-center border-l border-[#d4d4d4] pl-[5px]">Rovina: XZ</div>],
          [1092, <div className="h-[20px] w-px bg-[#d4d4d4]" />],
          [1168, <div className="h-[20px] w-px bg-[#d4d4d4]" />],
          [1244, <div className="h-[20px] w-px bg-[#d4d4d4]" />],
          [1320, <div className="h-[20px] w-px bg-[#d4d4d4]" />],
        ]} />
      </div>
    </div>
  );
}
